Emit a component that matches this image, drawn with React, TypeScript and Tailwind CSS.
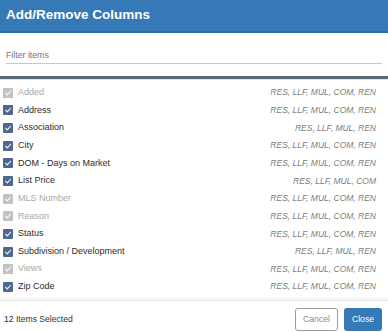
const rows: { label: string; types: string; checked: boolean; locked: boolean }[] = [
  { label: 'Added', types: 'RES, LLF, MUL, COM, REN', checked: true, locked: true },
  { label: 'Address', types: 'RES, LLF, MUL, COM, REN', checked: true, locked: false },
  { label: 'Association', types: 'RES, LLF, MUL, REN', checked: true, locked: false },
  { label: 'City', types: 'RES, LLF, MUL, COM, REN', checked: true, locked: false },
  { label: 'DOM - Days on Market', types: 'RES, LLF, MUL, COM, REN', checked: true, locked: false },
  { label: 'List Price', types: 'RES, LLF, MUL, COM', checked: true, locked: false },
  { label: 'MLS Number', types: 'RES, LLF, MUL, COM, REN', checked: true, locked: true },
  { label: 'Reason', types: 'RES, LLF, MUL, COM, REN', checked: true, locked: true },
  { label: 'Status', types: 'RES, LLF, MUL, COM, REN', checked: true, locked: false },
  { label: 'Subdivision / Development', types: 'RES, LLF, MUL, REN', checked: true, locked: false },
  { label: 'Views', types: 'RES, LLF, MUL, COM, REN', checked: true, locked: true },
  { label: 'Zip Code', types: 'RES, LLF, MUL, COM, REN', checked: true, locked: false },
  { label: 'Accessibility Features', types: 'RES, MUL, REN', checked: false, locked: false },
];

function Check({ checked, locked }: { checked: boolean; locked: boolean }) {
  if (!checked) {
    return <span className="h-[10px] w-[10px] shrink-0 rounded-[1px] border border-[#8a8a8a] bg-white" />;
  }
  return (
    <span
      className={`flex h-[10px] w-[10px] shrink-0 items-center justify-center rounded-[1px] ${
        locked ? 'bg-[#c2c2c2]' : 'bg-[#4f6890]'
      }`}
    >
      <svg width="8" height="8" viewBox="0 0 10 10" fill="none">
        <path d="M2 5.3 L4.1 7.3 L8.2 2.8" stroke="white" strokeWidth="1.3" strokeLinecap="round" strokeLinejoin="round" />
      </svg>
    </span>
  );
}

export default function App() {
  return (
    <div className="flex h-[332px] w-[388px] flex-col overflow-hidden bg-white font-['Liberation_Sans',Arial,sans-serif]">
      <header className="flex h-[33px] shrink-0 items-center border-b-2 border-[#2f6ea8] bg-[#3579b6] px-[6px] pb-[2px]">
        <h1 className="text-[13.5px] font-bold leading-[16px] text-white">Add/Remove Columns</h1>
      </header>

      <div className="shrink-0 px-[6px] pt-[17px] pb-[12px]">
        <div className="border-b border-[#c8c8c8] pb-[2px] text-[8.75px] leading-[11px] text-[#757575]">Filter items</div>
      </div>

      <div className="h-[3px] shrink-0 bg-[#5c6977]" />
      <div className="h-px shrink-0 bg-[#e2e2e2]" />

      <ul className="flex-1 overflow-hidden pt-[4px]">
        {rows.map((r) => (
          <li key={r.label} className="flex h-[17.65px] items-center gap-[5px] pl-[3px] pr-[12px]">
            <Check checked={r.checked} locked={r.locked} />
            <span className={`text-[9px] ${r.locked ? 'text-[#a8a8a8]' : 'text-[#2b2b2b]'}`}>{r.label}</span>
            <span className="ml-auto text-[8.5px] italic text-[#7c7c7c]">{r.types}</span>
          </li>
        ))}
      </ul>

      <footer className="flex h-[32px] shrink-0 items-center border-t border-[#e4e4e4] bg-white pt-[5px] pl-[4px] pr-[6px] shadow-[0_-2px_3px_rgba(0,0,0,0.06)]">
        <span className="text-[8.6px] text-[#333]">12 Items Selected</span>
        <div className="ml-auto flex gap-[6px]">
          <button className="h-[23px] w-[43px] rounded-[3px] border border-[#9a9a9a] bg-white text-[8.6px] text-[#8a8a8a]">
            Cancel
          </button>
          <button className="h-[23px] w-[38px] rounded-[3px] bg-[#3579b6] text-[8.6px] text-white">Close</button>
        </div>
      </footer>
    </div>
  );
}
